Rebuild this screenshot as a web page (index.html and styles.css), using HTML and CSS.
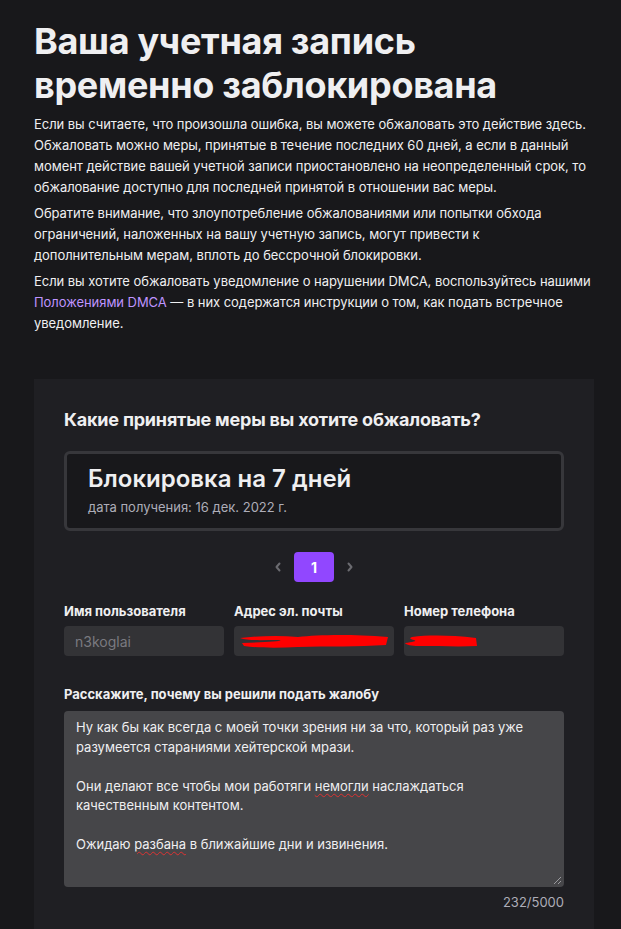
FILE: index.html
```html
<!DOCTYPE html>
<html lang="ru">
<head>
    <meta charset="UTF-8">
    <meta name="viewport" content="width=device-width, initial-scale=1.0">
    <title>Учетная запись заблокирована</title>
    <link rel="stylesheet" href="styles.css">
</head>
<body>
<div class="page">
    <h1 class="title">Ваша учетная запись временно заблокирована</h1>
    <p class="text">Если вы считаете, что произошла ошибка, вы можете обжаловать это действие здесь. Обжаловать можно меры, принятые в течение последних 60 дней, а если в данный момент действие вашей учетной записи приостановлено на неопределенный срок, то обжалование доступно для последней принятой в отношении вас меры.</p>
    <p class="text">Обратите внимание, что злоупотребление обжалованиями или попытки обхода ограничений, наложенных на вашу учетную запись, могут привести к<br>дополнительным мерам, вплоть до бессрочной блокировки.</p>
    <p class="text">Если вы хотите обжаловать уведомление о нарушении DMCA, воспользуйтесь нашими <a href="#" class="link">Положениями DMCA</a> — в них содержатся инструкции о том, как подать встречное уведомление.</p>

    <div class="card">
        <h2 class="card-title">Какие принятые меры вы хотите обжаловать?</h2>

        <div class="action">
            <div class="action-name">Блокировка на 7 дней</div>
            <div class="action-date">дата получения: 16 дек. 2022 г.</div>
        </div>

        <div class="pager">
            <span class="chevron">
                <svg width="8" height="10" viewBox="0 0 8 10"><path d="M5.5 1.5 2.5 5l3 3.5" fill="none" stroke="#6b6b70" stroke-width="2" stroke-linecap="round" stroke-linejoin="round"/></svg>
            </span>
            <button type="button" class="page-btn">1</button>
            <span class="chevron">
                <svg width="8" height="10" viewBox="0 0 8 10"><path d="M2.5 1.5 5.5 5l-3 3.5" fill="none" stroke="#6b6b70" stroke-width="2" stroke-linecap="round" stroke-linejoin="round"/></svg>
            </span>
        </div>

        <div class="fields">
            <div class="field">
                <label class="field-label">Имя пользователя</label>
                <div class="input placeholder">n3koglai</div>
            </div>
            <div class="field">
                <label class="field-label">Адрес эл. почты</label>
                <div class="input">
                    <svg class="scribble" width="152" height="18" viewBox="0 0 152 18">
                        <path d="M2 6 C20 4 40 3 60 5 C80 3 110 2 150 5 L148 13 C120 15 90 14 60 15 C40 16 20 16 6 14 L4 11 C30 10 50 9 40 8 C25 8 10 9 2 6 Z" fill="#ff0000"/>
                    </svg>
                </div>
            </div>
            <div class="field">
                <label class="field-label">Номер телефона</label>
                <div class="input">
                    <svg class="scribble scribble-short" width="76" height="18" viewBox="0 0 76 18">
                        <path d="M8 5 C25 3 45 3 72 6 L73 14 C55 15 35 14 14 14 C8 14 2 13 1 11 C8 10 14 9 10 8 C6 7 5 6 8 5 Z" fill="#ff0000"/>
                    </svg>
                </div>
            </div>
        </div>

        <label class="field-label reason-label">Расскажите, почему вы решили подать жалобу</label>
        <div class="textarea">
            <p>Ну как бы как всегда с моей точки зрения ни за что, который раз уже разумеется стараниями хейтерской мрази.</p>
            <p>Они делают все чтобы мои работяги <span class="typo">немогли</span> наслаждаться качественным контентом.</p>
            <p>Ожидаю <span class="typo">разбана</span> в ближайшие дни и извинения.</p>
            <svg class="grip" width="9" height="9" viewBox="0 0 9 9"><path d="M8 1 1 8M8 5 5 8" stroke="#9a9a9e" stroke-width="1"/></svg>
        </div>
        <div class="counter">232/5000</div>
    </div>
</div>
</body>
</html>
```

FILE: styles.css
```css
body {
    font-family: Inter, "Noto Sans", Arial, sans-serif;
    background-color: #18181b;
    color: #efeff1;
    margin: 0;
    padding: 0;
}

.page {
    width: 560px;
    margin-left: 34px;
    padding-top: 19px;
}

.title {
    font-size: 36px;
    font-weight: 700;
    line-height: 44px;
    letter-spacing: -0.3px;
    margin: 0 0 7px 0;
    color: #efeff1;
    width: 500px;
}

.text {
    font-size: 13px;
    line-height: 21px;
    margin: 0 0 5px 0;
    letter-spacing: -0.05px;
}

.link {
    color: #bf94ff;
    text-decoration: none;
}

.card {
    background-color: #1f1f23;
    margin-top: 45px;
    padding: 30px 30px 40px 30px;
}

.card-title {
    font-size: 18px;
    font-weight: 700;
    line-height: 22px;
    letter-spacing: -0.2px;
    margin: 0 0 20px 0;
}

.action {
    border: 3px solid #37373b;
    border-radius: 6px;
    background-color: #18181b;
    padding: 10px 21px 12px 21px;
}

.action-name {
    font-size: 24px;
    font-weight: 600;
    line-height: 30px;
}

.action-date {
    font-size: 13px;
    line-height: 18px;
    margin-top: 4px;
    color: #adadb8;
}

.pager {
    display: flex;
    justify-content: center;
    align-items: center;
    gap: 12px;
    margin-top: 21px;
}

.chevron {
    display: flex;
    width: 8px;
}

.page-btn {
    width: 40px;
    height: 30px;
    border: none;
    border-radius: 4px;
    background-color: #9147ff;
    color: #fff;
    font-family: inherit;
    font-size: 14px;
    font-weight: 700;
    padding: 0;
}

.fields {
    display: grid;
    grid-template-columns: repeat(3, 1fr);
    gap: 10px;
    margin-top: 21px;
}

.field {
    display: flex;
    flex-direction: column;
}

.field-label {
    font-size: 13px;
    font-weight: 700;
    line-height: 16px;
    margin-bottom: 7px;
    display: block;
}

.input {
    height: 30px;
    box-sizing: border-box;
    border-radius: 4px;
    background-color: #333336;
    padding: 0 4px;
    display: flex;
    align-items: center;
    font-size: 14px;
}

.placeholder {
    color: #7a7a80;
    padding-left: 11px;
}

.scribble-short {
    margin-left: -4px;
}

.reason-label {
    margin-top: 30px;
    margin-bottom: 9px;
}

.textarea {
    position: relative;
    height: 176px;
    box-sizing: border-box;
    background-color: #464649;
    border-radius: 4px;
    padding: 7px 12px;
    font-size: 13px;
    line-height: 19.5px;
    color: #efeff1;
}

.textarea p {
    margin: 0 0 19.5px 0;
}

.typo {
    text-decoration: underline wavy #d33;
    text-decoration-thickness: 1px;
    text-underline-offset: 2px;
}

.grip {
    position: absolute;
    right: 2px;
    bottom: 2px;
}

.counter {
    text-align: right;
    font-size: 13px;
    line-height: 18px;
    color: #adadb8;
    margin-top: 6px;
}
```
